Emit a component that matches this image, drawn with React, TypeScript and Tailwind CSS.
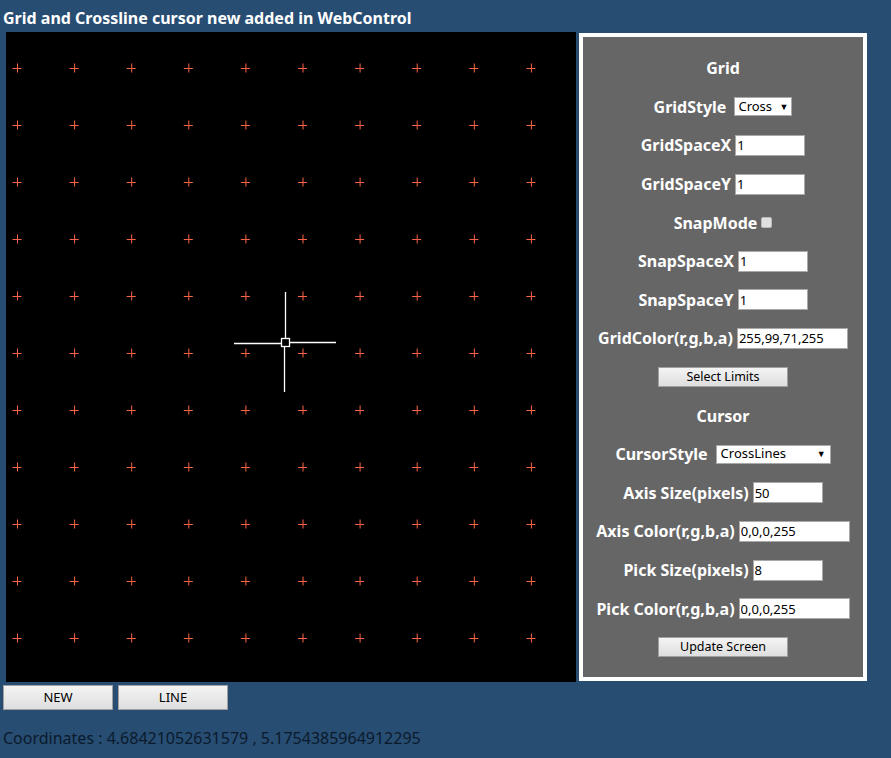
import React from 'react';

const cols = Array.from({ length: 10 }, (_, i) => 11 + i * 57.1);
const rows = Array.from({ length: 11 }, (_, j) => 36 + j * 57);

function Row({ children }: { children: React.ReactNode }) {
  return <div className="flex h-[38.6px] items-center justify-center gap-1">{children}</div>;
}

function Label({ children }: { children: React.ReactNode }) {
  return <span className="text-[16px] font-bold text-white">{children}</span>;
}

function Field({ value, w = 'w-[70px]' }: { value: string; w?: string }) {
  return (
    <input
      readOnly
      value={value}
      className={`${w} h-[21px] border border-[#a9a9a9] bg-white px-[1px] font-['Liberation_Sans',sans-serif] text-[13px] text-black outline-none`}
    />
  );
}

function Btn({ children, w }: { children: React.ReactNode; w: string }) {
  return (
    <button
      type="button"
      className={`${w} h-[20px] border border-[#a0a0a0] bg-gradient-to-b from-[#f4f4f4] to-[#dedede] font-['Liberation_Sans',sans-serif] text-[12.5px] text-black`}
    >
      {children}
    </button>
  );
}

export default function App() {
  return (
    <div className="h-[758px] w-[891px] overflow-hidden bg-[#274d73] font-['Open_Sans',sans-serif]">
      <div className="pl-[3px] pt-[7px] text-[16px] font-bold leading-[22px] text-white">
        Grid and Crossline cursor new added in WebControl
      </div>
      <div className="mt-[3px] flex items-start">
        <svg width="570" height="650" className="ml-[6px] bg-black">
          {rows.map((y) =>
            cols.map((x) => (
              <g key={`${x}-${y}`} stroke="#ff6347" strokeWidth="1">
                <line x1={x - 4.5} y1={y + 0.5} x2={x + 4.5} y2={y + 0.5} />
                <line x1={x + 0.5} y1={y - 4.5} x2={x + 0.5} y2={y + 4.5} />
              </g>
            )),
          )}
          <g stroke="white" strokeWidth="1.3" fill="none">
            <line x1="279.5" y1="260" x2="279.5" y2="306" />
            <line x1="278.5" y1="314" x2="278.5" y2="360" />
            <line x1="228" y1="311.5" x2="276" y2="311.5" />
            <line x1="284" y1="310.5" x2="330" y2="310.5" />
            <rect x="275.5" y="306.5" width="8" height="8" />
          </g>
        </svg>
        <div className="ml-[3px] mt-[1px] h-[648px] w-[288px] border-4 border-white bg-[#666666] pt-[12px]">
          <Row><Label>Grid</Label></Row>
          <Row>
            <Label>GridStyle</Label>
            <span className="ml-1 flex h-[19px] w-[58px] items-center justify-between border border-[#a9a9a9] bg-white px-[3px] font-['Liberation_Sans',sans-serif] text-[13px] text-black">
              Cross<span className="text-[9px]">▼</span>
            </span>
          </Row>
          <Row><Label>GridSpaceX</Label><Field value="1" /></Row>
          <Row><Label>GridSpaceY</Label><Field value="1" /></Row>
          <Row>
            <Label>SnapMode</Label>
            <span className="h-[11px] w-[11px] rounded-[2px] border border-[#bbb] bg-[#e0e0e0]" />
          </Row>
          <Row><Label>SnapSpaceX</Label><Field value="1" /></Row>
          <Row><Label>SnapSpaceY</Label><Field value="1" /></Row>
          <Row><Label>GridColor(r,g,b,a)</Label><Field value="255,99,71,255" w="w-[111px]" /></Row>
          <Row><Btn w="w-[130px]">Select Limits</Btn></Row>
          <Row><Label>Cursor</Label></Row>
          <Row>
            <Label>CursorStyle</Label>
            <span className="ml-1 flex h-[19px] w-[115px] items-center justify-between border border-[#a9a9a9] bg-white px-[4px] font-['Liberation_Sans',sans-serif] text-[13px] text-black">
              CrossLines<span className="text-[9px]">▼</span>
            </span>
          </Row>
          <Row><Label>Axis Size(pixels)</Label><Field value="50" /></Row>
          <Row><Label>Axis Color(r,g,b,a)</Label><Field value="0,0,0,255" w="w-[111px]" /></Row>
          <Row><Label>Pick Size(pixels)</Label><Field value="8" /></Row>
          <Row><Label>Pick Color(r,g,b,a)</Label><Field value="0,0,0,255" w="w-[111px]" /></Row>
          <Row><Btn w="w-[130px]">Update Screen</Btn></Row>
        </div>
      </div>
      <div className="ml-[3px] mt-[3px] flex gap-[5px]">
        <button type="button" className="h-[25px] w-[110px] border border-[#a0a0a0] bg-gradient-to-b from-[#f4f4f4] to-[#dedede] font-['Liberation_Sans',sans-serif] text-[13px] text-black">NEW</button>
        <button type="button" className="h-[25px] w-[110px] border border-[#a0a0a0] bg-gradient-to-b from-[#f4f4f4] to-[#dedede] font-['Liberation_Sans',sans-serif] text-[13px] text-black">LINE</button>
      </div>
      <div className="ml-[3px] mt-[16px] text-[16px] text-[#0b1a2b]">Coordinates : 4.68421052631579 , 5.1754385964912295</div>
    </div>
  );
}
